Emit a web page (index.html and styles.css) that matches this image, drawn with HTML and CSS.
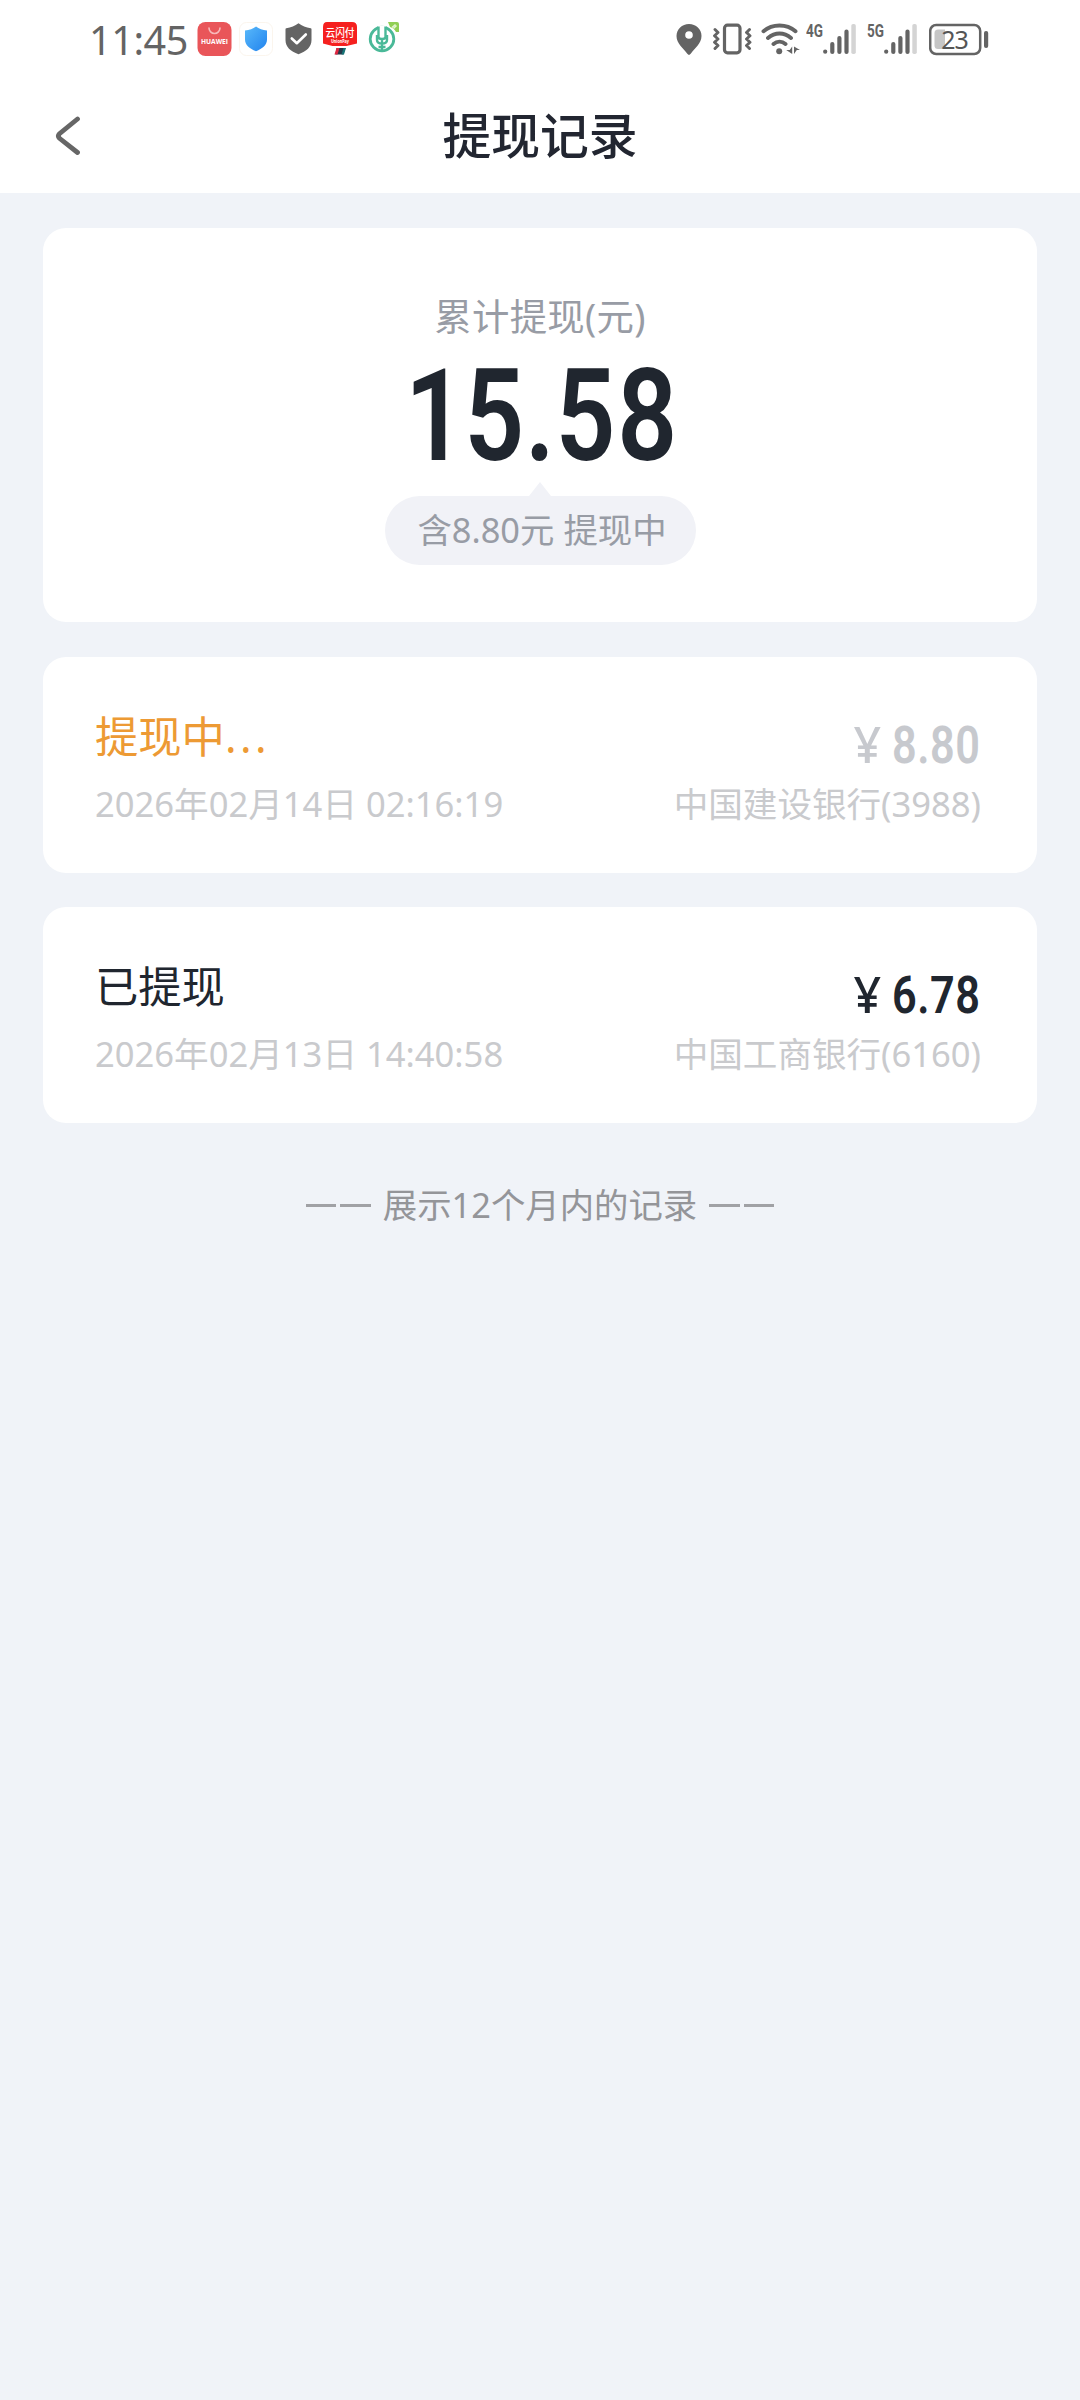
FILE: index.html
```html
<!DOCTYPE html>
<html lang="zh-CN">
<head>
<meta charset="UTF-8">
<title>提现记录</title>
<link rel="stylesheet" href="styles.css">
</head>
<body>
<header class="top">
  <div class="status-bar">
    <div class="status-left">
      <span class="clock">11:45</span>
      <svg class="i-store" viewBox="0 0 35 40" width="35" height="40">
        <rect x="0.5" y="2" width="34" height="34" rx="8" fill="#e95559"/>
        <path d="M12 8a5.5 5.5 0 0 0 11 0" fill="none" stroke="#f7b9ba" stroke-width="1.6" stroke-linecap="round"/>
        <text x="17.5" y="24" text-anchor="middle" textLength="27" lengthAdjust="spacingAndGlyphs" class="store-text">HUAWEI</text>
      </svg>
      <svg class="i-guard" viewBox="0 0 34 40" width="34" height="40">
        <defs><linearGradient id="g" x1="0" y1="0" x2="1" y2="1"><stop offset="0" stop-color="#59b9fa"/><stop offset="1" stop-color="#2183ee"/></linearGradient></defs>
        <rect x="0.5" y="2.5" width="33" height="33" rx="7" fill="#fff" stroke="#fbf5ed"/>
        <path d="M17 6.500c3 2.200 6.500 3.500 11 4v9c0 5.500-4.500 9-11 11.700-6.500-2.700-11-6.200-11-11.700v-9c4.500-.5 8-1.800 11-4z" fill="url(#g)"/>
      </svg>
      <svg class="i-shield" viewBox="0 0 27 40" width="27" height="40">
        <path d="M13.500 3.200c3.500 2.600 7.500 4.200 12.200 5 .5.1.8.5.8 1V20c0 7-5 11.300-13 14.300C5.500 31.300.5 27 .5 20V9.200c0-.5.3-.9.8-1 4.700-.8 8.700-2.400 12.200-5z" fill="#646464"/>
        <path d="M6.800 18.500l5 4.700 9-8.700" fill="none" stroke="#fff" stroke-width="2.600" stroke-linecap="round" stroke-linejoin="round"/>
      </svg>
      <svg class="i-pay" viewBox="0 0 36 40" width="36" height="40">
        <path d="M5 2h25q5 0 5 5v16.500L24.500 26h-14L1 23.500V7q0-5 4-5z" fill="#f5201f"/>
        <path d="M14.500 28h9l-2 6.500h-8z" fill="#26384a"/><path d="M14.500 28h3l-2 6.500h-3z" fill="#de2740"/><path d="M21.500 28h2.500l-2 6.500h-2.500z" fill="#177477"/>
        <text x="18" y="17" text-anchor="middle" textLength="29" lengthAdjust="spacingAndGlyphs" class="pay-text">云闪付</text>
        <text x="18" y="23" text-anchor="middle" textLength="18" lengthAdjust="spacingAndGlyphs" class="pay-sub">UnionPay</text>
      </svg>
      <svg class="i-bank" viewBox="0 0 32 40" width="32" height="40">
        <circle cx="14" cy="19" r="11.800" fill="none" stroke="#4ab998" stroke-width="2.800"/>
        <path d="M10 5.500h8v13h-8z" fill="#fff"/>
        <path d="M10.500 6.500V17q0 2 3.500 2t3.500-2V6.500M14 19v11M9 15v5q0 3.500 5 3.500t5-3.500v-5M10.500 27h7" fill="none" stroke="#4ab998" stroke-width="2.400"/>
        <path d="M20 2h9q2 0 2 2v8h-3q-2-4-6-5z" fill="#91cf55"/><path d="M24 7.500l3.500-3M25.500 8.500l3-3" stroke="#e4f5d0" stroke-width="1.500"/>
      </svg>
    </div>
    <div class="status-right">
      <svg class="i-pin" viewBox="0 0 26 40" width="26" height="40">
        <path fill-rule="evenodd" d="M13 4C6 4 .5 9.200.5 16c0 7.500 7 12.300 10.800 17.800q1.700 2.200 3.400 0C18.500 28.300 25.500 23.500 25.500 16 25.500 9.200 20 4 13 4zm0 7.200a3.800 3.800 0 1 1 0 7.600 3.800 3.800 0 0 1 0-7.600z" fill="#646464"/>
      </svg>
      <svg class="i-vibrate" viewBox="0 0 39 40" width="39" height="40">
        <g fill="none" stroke="#646464" stroke-linejoin="round" stroke-linecap="round"><rect x="11.500" y="5.200" width="15.500" height="27.600" rx="3" stroke-width="3.200"/>
        <path d="M2 9.500l3 3-3.500 3.200L5 19l-3.500 3.200L5 25.500l-3 3M36.500 9.500l-3 3 3.500 3.200-3.500 3.300 3.500 3.200-3.500 3.300 3 3" stroke-width="2.900"/></g>
      </svg>
      <svg class="i-wifi" viewBox="0 0 39 40" width="39" height="40">
        <g fill="none" stroke="#646464" stroke-width="3.900" stroke-linecap="round"><path d="M2.500 11.300c9-7.800 23-7.800 32 0M7 18c7-6 16-6 23 0M12.500 24c3.500-3 8.500-3 12 0"/></g>
        <circle cx="18.200" cy="31.200" r="3" fill="#646464"/><path d="M31.200 26.500v7.500l-6-4h3.500zM33 34v-7.500l6 3.500h-3.200z" fill="#646464"/>
      </svg>
      <svg class="i-signal" viewBox="0 0 51 40" width="51" height="40">
        <text x="0" y="17" textLength="17" lengthAdjust="spacingAndGlyphs" class="net-text">4G</text>
        <g stroke="#646464" stroke-width="4.200" stroke-linecap="round"><path d="M19.200 31.500v.2M26.300 24v8M33.400 18v14M40.500 11.500V32"/></g><rect x="45.300" y="4" width="4.500" height="30" rx="1.800" fill="#d4d4d4"/>
      </svg>
      <svg class="i-signal2" viewBox="0 0 51 40" width="51" height="40">
        <text x="0" y="17" textLength="17" lengthAdjust="spacingAndGlyphs" class="net-text">5G</text>
        <g stroke="#646464" stroke-width="4.200" stroke-linecap="round"><path d="M19.200 31.500v.2M26.300 24v8M33.400 18v14M40.500 11.500V32"/></g><rect x="45.300" y="4" width="4.500" height="30" rx="1.800" fill="#d4d4d4"/>
      </svg>
      <svg class="i-battery" viewBox="0 0 61 40" width="61" height="40">
        <rect x="1.200" y="5" width="50" height="29" rx="6" fill="#fff" stroke="#646464" stroke-width="2.500"/>
        <path d="M9 9.500h7v19.500H9q-3.500 0-3.500-3.500V13q0-3.500 3.500-3.500z" fill="#c6c6c6"/>
        <text x="25.500" y="28.500" text-anchor="middle" class="battery-text">23</text>
        <rect x="55" y="11" width="4.200" height="17" rx="2" fill="#646464"/>
      </svg>
    </div>
  </div>
  <nav class="nav">
    <svg class="back" viewBox="0 0 28 42" width="28" height="42"><path d="M23.500 5L5.500 19.700q-2.200 2.300 0 4.600L23.500 38.500" fill="none" stroke="#666" stroke-width="4.800" stroke-linecap="round"/></svg>
    <h1 class="title">提现记录</h1>
  </nav>
</header>
<main class="content">
  <section class="card summary">
    <div class="summary-label">累计提现(元)</div>
    <div class="summary-total"><span class="one">1</span>5.<span class="tail">58</span></div>
    <div class="pill">含8.80元 提现中</div>
  </section>
  <section class="card record">
    <div class="info">
      <div class="state pending">提现中<span class="dots">...</span></div>
      <div class="meta">2026年02月14日 02:16:19</div>
    </div>
    <div class="pay">
      <div class="amount muted"><span class="yen">¥</span>8.80</div>
      <div class="meta">中国建设银行(3988)</div>
    </div>
  </section>
  <section class="card record">
    <div class="info">
      <div class="state">已提现</div>
      <div class="meta">2026年02月13日 14:40:58</div>
    </div>
    <div class="pay">
      <div class="amount"><span class="yen">¥</span>6.78</div>
      <div class="meta">中国工商银行(6160)</div>
    </div>
  </section>
  <p class="footer"><span class="rule"></span><span class="rule"></span><span class="footer-text">展示12个月内的记录</span><span class="rule"></span><span class="rule"></span></p>
</main>
</body>
</html>
```

FILE: styles.css
```css
* { box-sizing: border-box; }
body {
  margin: 0;
  min-height: 2400px;
  background: #f0f3f8;
  color: #20262f;
  font-family: "Noto Sans", "Noto Sans CJK SC", sans-serif;
}
svg { display: block; flex: none; }

.top { height: 193px; background: #fff; }
.status-bar { display: flex; justify-content: space-between; height: 77px; padding: 20px 90px 0 89px; }
.status-left, .status-right { display: flex; height: 40px; }
.clock { width: 108px; font-size: 39.500px; line-height: 41px; color: #646464; letter-spacing: -0.4px; white-space: nowrap; }
.i-guard { margin-left: 7px; }
.i-shield { margin-left: 12px; }
.i-pay { margin-left: 10px; }
.i-bank { margin-left: 10px; }
.i-vibrate { margin-left: 11px; }
.i-wifi { margin-left: 9px; }
.i-signal { margin-left: 6px; }
.i-signal2 { margin-left: 10px; }
.i-battery { margin-left: 11px; }
.store-text { font: 700 7px "Open Sans", sans-serif; fill: #fff; }
.pay-text { font: 500 11px "Noto Sans CJK SC", sans-serif; fill: #fff; }
.pay-sub { font: 700 5px "Noto Sans", sans-serif; fill: #fff; }
.net-text { font: 700 18px Roboto, sans-serif; fill: #646464; }
.battery-text { font: 400 25px "Noto Sans", sans-serif; fill: #555; letter-spacing: -1px; }

.nav { display: grid; grid-template-columns: 120px 1fr 120px; align-items: center; height: 116px; }
.back { margin-left: 54px; }
.title { margin: 0; text-align: center; font-size: 48.800px; font-weight: 500; line-height: 116px; color: #222631; }

.content { padding: 35px 43px 0; }
.card { background: #fff; border-radius: 23px; }
.summary { height: 394px; padding-top: 58px; display: flex; flex-direction: column; align-items: center; }
.summary-label { height: 61px; line-height: 61px; font-size: 37.400px; letter-spacing: 0.3px; color: #989ca5; }
.summary-total {
  height: 130px;
  line-height: 138px;
  font-family: Roboto, sans-serif;
  font-size: 128px;
  font-weight: 600;
  font-kerning: none;
  letter-spacing: 1px;
  transform: translateX(2px) scaleX(0.82);
}
.one { letter-spacing: -1px; }
.tail { letter-spacing: 2px; }
.pill {
  position: relative;
  width: 311px;
  height: 69px;
  margin-top: 19px;
  padding-left: 4px;
  border-radius: 35px;
  background: #f1f2f7;
  text-align: center;
  line-height: 67px;
  font-size: 34.400px;
  color: #989ca5;
}
.pill::before {
  content: "";
  position: absolute;
  left: 144px;
  top: -14px;
  border: solid transparent;
  border-width: 0 11px 14px;
  border-bottom-color: #f1f2f7;
}

.record { display: flex; justify-content: space-between; height: 216px; margin-top: 34px; padding: 46px 56px 0 52px; }
.summary + .record { margin-top: 35px; }
.state { height: 67px; line-height: 67px; font-size: 43.300px; }
.pending { color: #ed9a34; }
.dots { letter-spacing: 3.500px; }
.meta { height: 67px; line-height: 67px; font-size: 34.600px; color: #c9cacd; white-space: nowrap; }
.pay { text-align: right; }
.amount {
  height: 67px;
  padding-right: 1px;
  line-height: 85px;
  font-family: Roboto, sans-serif;
  font-size: 51.500px;
  font-weight: 600;
  font-kerning: none;
  letter-spacing: 0.6px;
  transform: scaleX(0.84);
  transform-origin: right center;
}
.yen {
  display: inline-block;
  margin-right: 14px;
  font-family: "Noto Sans", sans-serif;
  font-weight: 500;
  line-height: 1;
  transform: scaleX(1.12);
}
.muted { color: #c7c9ce; }

.footer { display: flex; justify-content: center; align-items: center; gap: 4px; height: 70px; margin: 47px 0 0; font-size: 34.400px; line-height: 70px; color: #949599; }
.footer-text { margin: 0 8px; }
.rule { width: 30.500px; height: 3px; background: #a0a1a5; }
```
